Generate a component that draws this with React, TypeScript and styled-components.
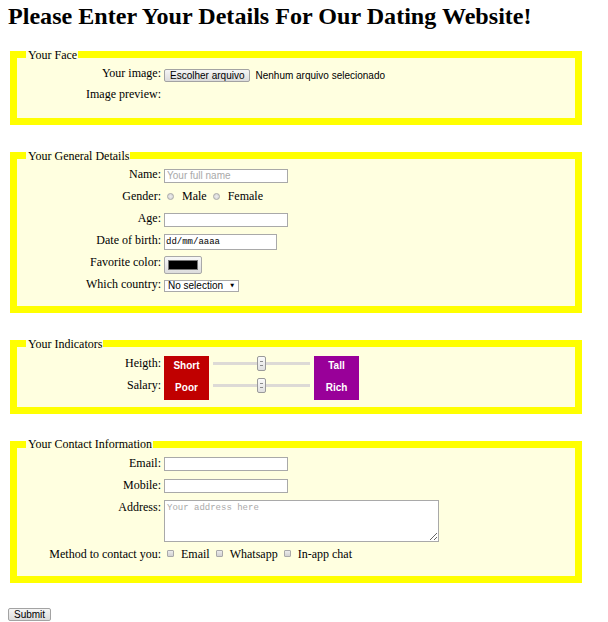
import React from "react";
import styled, { createGlobalStyle } from "styled-components";

const GlobalStyle = createGlobalStyle`
  html, body {
    margin: 0;
    padding: 0;
    background: #ffffff;
    overflow: hidden;
  }
  body {
    font-family: "Liberation Serif", "Times New Roman", serif;
    font-size: 12px;
    color: #000000;
  }
`;

const sans = `"Liberation Sans", Arial, sans-serif`;
const mono = `"Liberation Mono", "Courier New", monospace`;

const Page = styled.form`
  padding: 3px 24px 0 8px;
`;

const Title = styled.h1`
  margin: 0 0 17px;
  font-family: "Liberation Serif", "Times New Roman", serif;
  font-size: 24.1px;
  line-height: 27.6px;
  font-weight: bold;
`;

const Section = styled.fieldset<{ $pt?: number }>`
  margin: 0 2px 23.5px;
  border: 7px solid #ffff00;
  background: #ffffe0;
  padding: ${(p) => p.$pt ?? 4.5}px 9px 7px;
  min-width: 0;
`;

const Legend = styled.legend`
  padding: 0 1px 0 2px;
  font-size: 12px;
  line-height: 14px;
`;

const Row = styled.div<{ $h?: number }>`
  display: flex;
  align-items: flex-start;
  height: ${(p) => p.$h ?? 22}px;
`;

const Label = styled.label`
  flex: 0 0 135px;
  margin-right: 3px;
  text-align: right;
  line-height: 14px;
  white-space: nowrap;
`;

const Button = styled.button`
  box-sizing: border-box;
  height: 13px;
  padding: 0 5px;
  border: 1px solid #a3a3a3;
  border-radius: 2px;
  background: linear-gradient(#f5f5f5, #dcdcdc);
  font-family: ${sans};
  font-size: 10px;
  line-height: 11px;
  color: #000;
`;

const FileButton = styled(Button)`
  margin-top: 3px;
`;

const FileStatus = styled.span`
  margin: 3px 0 0 5px;
  font-family: ${sans};
  font-size: 10px;
  line-height: 13px;
`;

const TextInput = styled.input`
  box-sizing: border-box;
  width: 124px;
  height: 14px;
  margin: 1.5px 0 0;
  padding: 0 2px;
  border: 1px solid #a9a9a9;
  background: #fff;
  font-family: ${sans};
  font-size: 10px;
  color: #000;
  outline: none;
  &::placeholder {
    color: #a9a9a9;
  }
`;

const DateInput = styled(TextInput)`
  width: 113px;
  height: 16px;
  margin-top: 1px;
  padding: 0 1px;
  font-family: ${mono};
  font-size: 9px;
`;

const AddressArea = styled.textarea`
  box-sizing: border-box;
  width: 275px;
  height: 42px;
  margin: 0;
  padding: 2px 2px;
  border: 1px solid #a9a9a9;
  background: #fff;
  font-family: ${mono};
  font-size: 9px;
  outline: none;
  &::placeholder {
    color: #a9a9a9;
  }
`;

const Options = styled.div`
  display: flex;
  align-items: center;
  height: 14px;
`;

const Radio = styled.input`
  appearance: none;
  -webkit-appearance: none;
  box-sizing: border-box;
  width: 7px;
  height: 7px;
  margin: 0 8px 0 3px;
  border: 1px solid #a9a9a9;
  border-radius: 50%;
  background: radial-gradient(#ececec, #d2d2d2);
`;

const Checkbox = styled.input`
  appearance: none;
  -webkit-appearance: none;
  box-sizing: border-box;
  width: 7px;
  height: 7px;
  margin: 0 7px 0 3px;
  border: 1px solid #a9a9a9;
  border-radius: 1px;
  background: linear-gradient(#ececec, #d2d2d2);
`;

const OptionText = styled.span`
  margin-right: 3px;
  line-height: 14px;
`;

const ColorButton = styled.span`
  box-sizing: border-box;
  display: flex;
  width: 38px;
  height: 18px;
  margin-top: 0.5px;
  padding: 3px;
  border: 1px solid #a9a9a9;
  border-radius: 2px;
  background: linear-gradient(#f7f7f7, #dddddd);
`;

const Swatch = styled.span<{ $color: string }>`
  flex: 1;
  border: 1px solid #777;
  background: ${(p) => p.$color};
`;

const SelectWrap = styled.span`
  position: relative;
  display: inline-block;
  margin-top: 3px;
`;

const Select = styled.select`
  appearance: none;
  -webkit-appearance: none;
  box-sizing: border-box;
  display: block;
  width: 75px;
  height: 12px;
  margin: 0;
  padding: 0 0 0 3px;
  border: 1px solid #a9a9a9;
  border-radius: 0;
  background: #fff;
  font-family: ${sans};
  font-size: 10px;
  line-height: 10px;
  color: #000;
  outline: none;
`;

const SelectArrow = styled.span`
  position: absolute;
  right: 5px;
  top: 3px;
  font-family: "DejaVu Sans", sans-serif;
  font-size: 5px;
  line-height: 5px;
  color: #000;
  pointer-events: none;
`;

const Badge = styled.div<{ $bg: string }>`
  box-sizing: border-box;
  display: flex;
  align-items: center;
  justify-content: center;
  width: 45px;
  height: 22px;
  padding-bottom: 2px;
  background: ${(p) => p.$bg};
  color: #ffffff;
  font-family: ${sans};
  font-size: 10px;
  font-weight: bold;
`;

const Range = styled.input`
  -webkit-appearance: none;
  appearance: none;
  width: 97px;
  height: 16px;
  margin: 0 4px;
  padding: 0;
  background: transparent;
  &::-webkit-slider-runnable-track {
    height: 3px;
    background: #dddad6;
    border: none;
  }
  &::-webkit-slider-thumb {
    -webkit-appearance: none;
    box-sizing: border-box;
    width: 9px;
    height: 15px;
    margin-top: -6px;
    border: 1px solid #9a9a9a;
    border-radius: 2px;
    background:
      linear-gradient(#8c8c8c, #8c8c8c) center 4px / 3px 1px no-repeat,
      linear-gradient(#8c8c8c, #8c8c8c) center 8px / 3px 1px no-repeat,
      linear-gradient(#fbfbfb, #e0e0e0);
  }
`;

const SubmitButton = styled(Button)`
  margin-top: 1.5px;
`;

export default function App() {
  return (
    <>
      <GlobalStyle />
      <Page onSubmit={(e) => e.preventDefault()}>
        <Title>Please Enter Your Details For Our Dating Website!</Title>

        <Section>
          <Legend>Your Face</Legend>
          <Row $h={21}>
            <Label>Your image:</Label>
            <FileButton type="button">Escolher arquivo</FileButton>
            <FileStatus>Nenhum arquivo selecionado</FileStatus>
          </Row>
          <Row $h={24}>
            <Label>Image preview:</Label>
          </Row>
        </Section>

        <Section>
          <Legend>Your General Details</Legend>
          <Row>
            <Label>Name:</Label>
            <TextInput type="text" placeholder="Your full name" />
          </Row>
          <Row>
            <Label>Gender:</Label>
            <Options>
              <Radio type="radio" name="gender" />
              <OptionText>Male</OptionText>
              <Radio type="radio" name="gender" />
              <OptionText>Female</OptionText>
            </Options>
          </Row>
          <Row>
            <Label>Age:</Label>
            <TextInput type="text" />
          </Row>
          <Row>
            <Label>Date of birth:</Label>
            <DateInput type="text" defaultValue="dd/mm/aaaa" readOnly />
          </Row>
          <Row>
            <Label>Favorite color:</Label>
            <ColorButton>
              <Swatch $color="#000000" />
            </ColorButton>
          </Row>
          <Row>
            <Label>Which country:</Label>
            <SelectWrap>
              <Select defaultValue="">
                <option value="">No selection</option>
              </Select>
              <SelectArrow>▼</SelectArrow>
            </SelectWrap>
          </Row>
        </Section>

        <Section $pt={5}>
          <Legend>Your Indicators</Legend>
          <Row>
            <Label>Heigth:</Label>
            <Badge $bg="#c00000">Short</Badge>
            <Range type="range" min={0} max={100} defaultValue={50} />
            <Badge $bg="#990099">Tall</Badge>
          </Row>
          <Row>
            <Label>Salary:</Label>
            <Badge $bg="#c00000">Poor</Badge>
            <Range type="range" min={0} max={100} defaultValue={50} />
            <Badge $bg="#990099">Rich</Badge>
          </Row>
        </Section>

        <Section>
          <Legend>Your Contact Information</Legend>
          <Row>
            <Label>Email:</Label>
            <TextInput type="email" />
          </Row>
          <Row>
            <Label>Mobile:</Label>
            <TextInput type="tel" />
          </Row>
          <Row $h={47}>
            <Label>Address:</Label>
            <AddressArea placeholder="Your address here" />
          </Row>
          <Row>
            <Label>Method to contact you:</Label>
            <Options>
              <Checkbox type="checkbox" />
              <OptionText>Email</OptionText>
              <Checkbox type="checkbox" />
              <OptionText>Whatsapp</OptionText>
              <Checkbox type="checkbox" />
              <OptionText>In-app chat</OptionText>
            </Options>
          </Row>
        </Section>

        <SubmitButton type="submit">Submit</SubmitButton>
      </Page>
    </>
  );
}
